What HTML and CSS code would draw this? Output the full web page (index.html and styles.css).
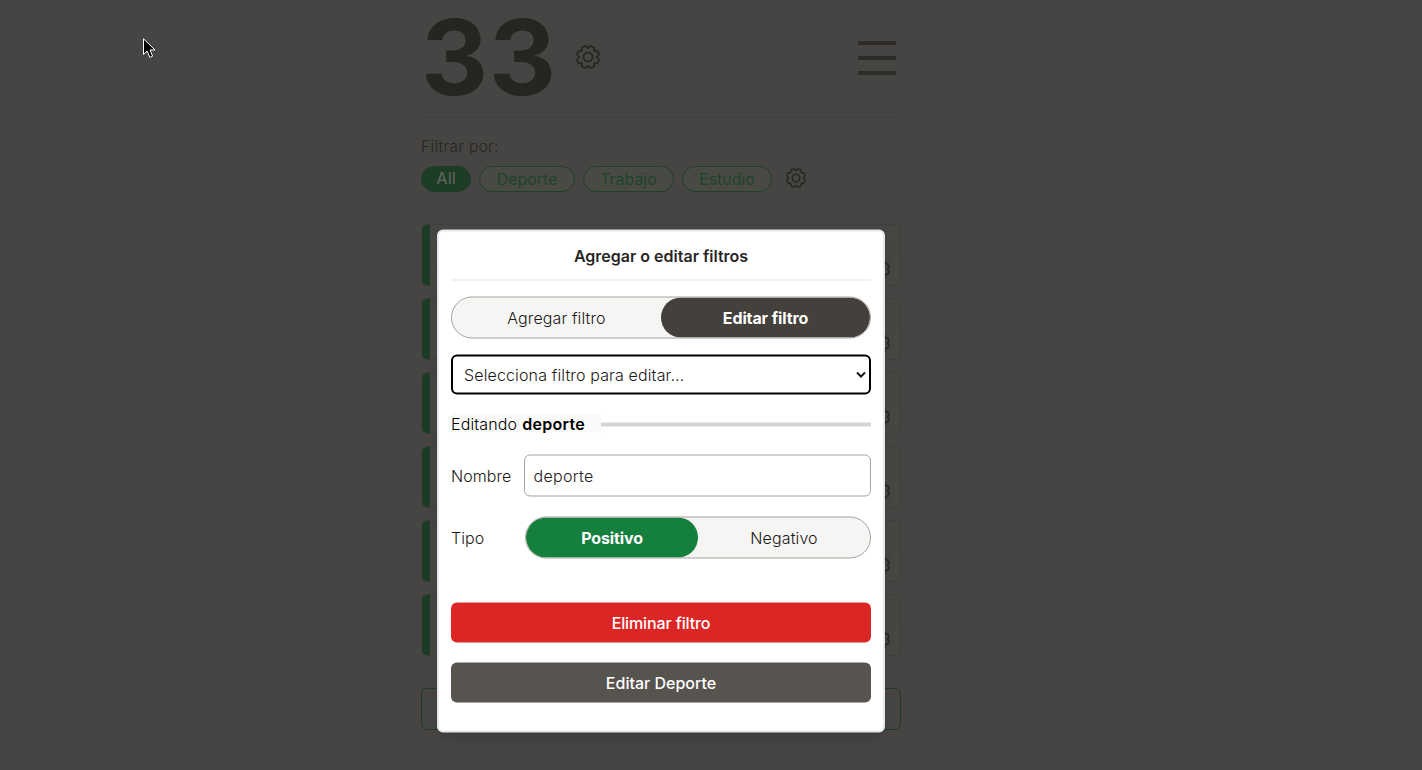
FILE: index.html
```html
<!DOCTYPE html>
<html lang="es">
<head>
<meta charset="utf-8">
<title>Filtros</title>
<link rel="stylesheet" href="styles.css">
</head>
<body>
<svg class="defs" width="0" height="0">
  <symbol id="gear" viewBox="-12 -12 24 24">
    <g fill="none" stroke="currentColor" stroke-linecap="round" stroke-linejoin="round">
      <g id="half">
        <g id="quarter">
          <path id="tooth" d="M0-9.2Q1-9.2 1.5-10.2Q2-11.2 3-10.9L5.4-9.9Q6.5-9.4 6.1-8.3Q5.8-7.2 6.5-6.5"/>
          <use href="#tooth" transform="rotate(45)"/>
        </g>
        <use href="#quarter" transform="rotate(90)"/>
      </g>
      <use href="#half" transform="rotate(180)"/>
      <circle r="4.5"/>
    </g>
  </symbol>
</svg>
<main class="page">
  <header class="header">
    <div class="score">33</div>
    <svg class="gear gear-lg"><use href="#gear"/></svg>
    <div class="menu"><span class="bar bar-warm"></span><span class="bar"></span><span class="bar"></span></div>
  </header>
  <div class="filter-label">Filtrar por:</div>
  <nav class="filters">
    <span class="pill pill-active">All</span>
    <span class="pill pill-deporte">Deporte</span>
    <span class="pill pill-trabajo">Trabajo</span>
    <span class="pill pill-estudio">Estudio</span>
    <svg class="gear gear-md"><use href="#gear"/></svg>
  </nav>
  <section class="cards">
    <article class="card"><svg class="gear gear-sm"><use href="#gear"/></svg></article>
    <article class="card"><svg class="gear gear-sm"><use href="#gear"/></svg></article>
    <article class="card"><svg class="gear gear-sm"><use href="#gear"/></svg></article>
    <article class="card"><svg class="gear gear-sm"><use href="#gear"/></svg></article>
    <article class="card"><svg class="gear gear-sm"><use href="#gear"/></svg></article>
    <article class="card"><svg class="gear gear-sm"><use href="#gear"/></svg></article>
  </section>
  <div class="add"></div>
</main>
<div class="modal">
  <h2 class="title">Agregar o editar filtros</h2>
  <div class="toggle"><span class="option">Agregar filtro</span><span class="option option-dark">Editar filtro</span></div>
  <select class="select"><option>Selecciona filtro para editar...</option></select>
  <div class="editing"><span class="editing-text">Editando <b>deporte</b></span><span class="rule"></span></div>
  <div class="field"><label class="label">Nombre</label><input class="input" value="deporte"></div>
  <div class="field field-type"><span class="label">Tipo</span><div class="toggle toggle-type"><span class="option option-green">Positivo</span><span class="option">Negativo</span></div></div>
  <button class="button button-red">Eliminar filtro</button>
  <button class="button button-gray">Editar Deporte</button>
</div>
<svg class="cursor" width="14" height="21" viewBox="0 0 14 21"><path d="M.5.8V16.5L4.2 13L6.8 19.4L9.6 18.2L7 12H12Z" fill="#000" stroke="#fff"/></svg>
</body>
</html>
```
FILE: styles.css
```css
* { box-sizing: border-box; }
body {
  margin: 0;
  height: 770px;
  overflow: hidden;
  background: #474543;
  color: #262520;
  font: 300 16px/24px Inter, sans-serif;
  letter-spacing: .12px;
}
.defs { position: absolute; }
.page { width: 480px; margin-left: 421px; }
.header {
  display: flex;
  align-items: center;
  height: 118px;
  padding-bottom: 2px;
  border-bottom: 1px solid #403e3c;
}
.score { width: 154px; font-size: 104px; line-height: 115px; font-weight: 700; letter-spacing: .8px; white-space: nowrap; }
.gear { display: block; flex: none; overflow: visible; color: #282722; }
.gear-lg { width: 24px; height: 24px; margin: 0 0 1px .5px; stroke-width: 1.9; }
.gear-md { width: 20px; height: 20px; margin: 0 0 2px 6px; stroke-width: 1.8; }
.gear-sm { width: 20px; height: 20px; stroke-width: 1.8; }
.menu { display: grid; gap: 11px; width: 38px; margin: 0 5px 0 auto; }
.bar { height: 4px; border-radius: 1px; background: #2c2b28; }
.bar-warm { background: #302925; }
.filter-label { margin-top: 16px; height: 24px; }
.filters { display: flex; align-items: center; gap: 8px; margin-top: 8px; height: 26px; color: #1e4429; }
.pill { height: 26px; border: 1px solid #1e4029; border-radius: 13px; text-align: center; line-height: 25px; font-weight: 400; letter-spacing: -.05px; background: #4a4a45; }
.pill-active { width: 50px; background: #1c3c26; border-color: #1c3c26; color: #5a635a; font-weight: 500; line-height: 23px; }
.pill-deporte { width: 96px; }
.pill-trabajo { width: 91px; }
.pill-estudio { width: 90px; }
.cards { display: grid; gap: 12px; margin-top: 32px; }
.card {
  display: flex;
  justify-content: flex-end;
  align-items: flex-end;
  height: 62px;
  padding: 0 10.5px 6px 0;
  border: 1px solid #403f3c;
  border-radius: 6px;
  background: linear-gradient(90deg, #1c3c26 8px, transparent 8px), linear-gradient(#474543, #464742);
}
.add { height: 42px; margin-top: 32px; border: 1px solid #1c3c26; border-radius: 6px; }
.modal {
  position: absolute;
  left: 437px;
  top: 229px;
  width: 448px;
  height: 503px;
  padding: 12px;
  transform: translateY(.5px);
  border: 2px solid #e5e7eb;
  border-radius: 6px;
  background: #fff;
  color: #1c1917;
  box-shadow: 0 10px 15px -3px #0000001a, 0 4px 6px -4px #0000001a;
}
.title { margin: 0; height: 37px; border-bottom: 1px solid #e7e5e4; text-align: center; font: 600 16px/24px Inter, sans-serif; letter-spacing: 0; color: #292524; }
.toggle { display: flex; height: 42px; margin-top: 16px; border: 1px solid #a8a29e; border-radius: 21px; background: #f5f5f4; overflow: hidden; }
.option { flex: 1; border-radius: 20px; text-align: center; line-height: 41px; }
.option-dark, .option-green { background: #44403c; color: #fff; font-weight: 700; letter-spacing: -.12px; }
.option-green { background: #15803d; }
.select { display: block; width: 420px; height: 40px; margin-top: 16px; padding: 0 0 0 7px; border: 2px solid #000; border-radius: 6px; background: #fff; color: #1c1917; font: 300 16px/24px Inter, sans-serif; letter-spacing: .14px; }
.editing { display: flex; align-items: center; height: 20px; margin-top: 18px; color: #000; }
.editing-text { width: 150px; line-height: 20px; height: 19px; background: #fafaf9; }
.editing b { font-weight: 600; letter-spacing: .28px; margin-left: .5px; }
.rule { flex: 1; height: 4px; margin-top: 4px; background: #d6d3d1; }
.field { display: flex; align-items: center; height: 42px; margin-top: 22px; }
.label { width: 73px; letter-spacing: .05px; }
.input { width: 347px; height: 42px; padding: 0 8.5px; border: 1px solid #a8a29e; border-radius: 6px; background: #fff; color: #1c1917; font: inherit; letter-spacing: .3px; }
.field-type { margin-top: 20px; }
.toggle-type { width: 346px; margin: 0 0 0 1px; }
.button { display: block; width: 420px; height: 40px; margin: 0; padding: 0; border: 0; border-radius: 6px; color: #fff; font: 500 16px/24px Inter, sans-serif; letter-spacing: 0; }
.button-red { margin-top: 44px; background: #dc2626; letter-spacing: -.12px; }
.button-gray { margin-top: 20px; background: #57534e; }
.cursor { position: absolute; left: 143px; top: 38px; }
```
